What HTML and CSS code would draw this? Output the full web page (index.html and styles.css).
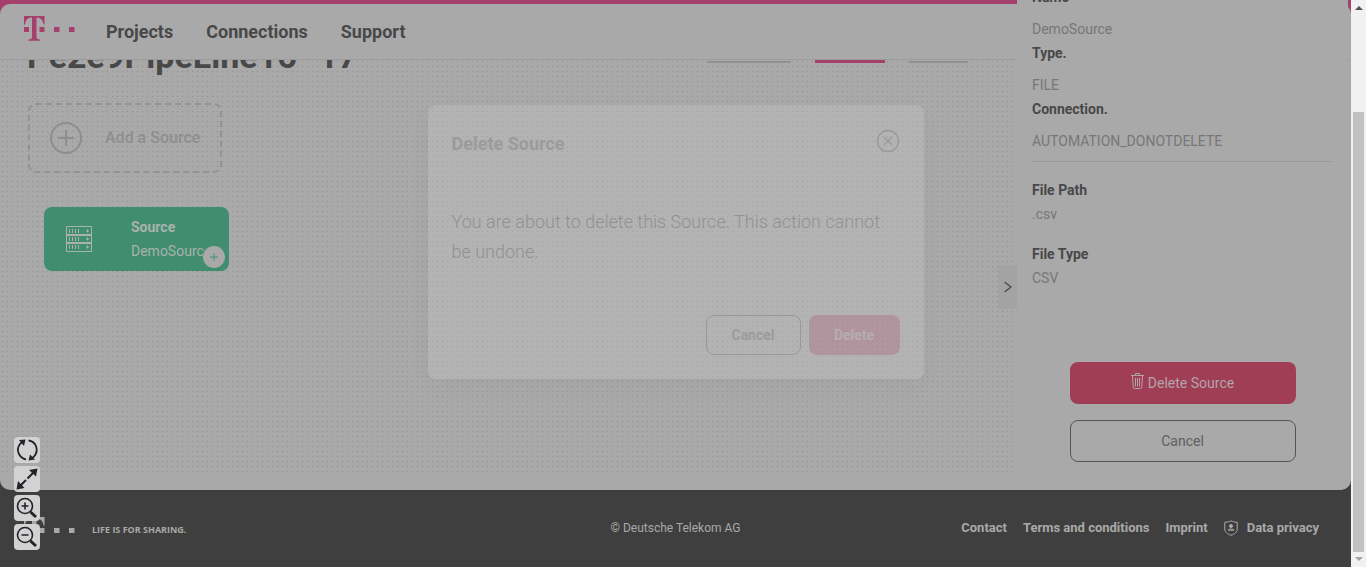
FILE: index.html
```html
<!DOCTYPE html>
<html lang="en">
<head>
<meta charset="utf-8">
<title>Pipeline</title>
<link rel="stylesheet" href="styles.css">
</head>
<body>
<svg class="defs" aria-hidden="true">
  <symbol id="t-logo" viewBox="0 0 52 26">
    <path d="M0 0h20.500v8.500h-1C19 4.500 17 1.500 12.500 1.400V20.500c0 2.400.8 2.900 3.500 3v1.200H4.500v-1.200c2.700-.1 3.500-.6 3.500-3V1.400C3.500 1.500 1.500 4.500 1 8.500H0zM0 11h5v5H0zM15.500 11h5v5h-5zM30 11h5.500v5H30zM45 11h5.500v5H45z" fill="currentColor"/>
  </symbol>
</svg>
<div class="window">
  <div class="app">
    <header class="header">
      <div class="header-inner">
        <svg class="logo" aria-hidden="true"><use href="#t-logo"/></svg>
        <nav class="nav">
          <a href="#">Projects</a>
          <a href="#">Connections</a>
          <a href="#">Support</a>
        </nav>
      </div>
    </header>

    <main class="workspace">
      <div class="title-row">
        <h1>Pe2e9PipeLine16 -17</h1>
        <div class="tabs">
          <span class="tab tab-first"></span>
          <span class="tab tab-active"></span>
          <span class="tab tab-last"></span>
        </div>
      </div>
      <button class="add-source" type="button">
        <svg width="34" height="34" viewBox="0 0 34 34" fill="none" stroke="currentColor" stroke-width="2" aria-hidden="true"><circle cx="17" cy="17" r="15"/><path d="M17 9v16M9 17h16"/></svg>
        Add a Source
      </button>
      <div class="node">
        <svg class="node-icon" width="26" height="26" viewBox="0 0 26 26" fill="none" stroke="currentColor" aria-hidden="true">
          <path d="M.5.500h25v25H.5zM0 8.500h26M0 9.500h26M0 16.500h26M0 17.500h26"/>
          <path d="M3.500 3v4M6.500 3v4M9.500 3v4M12.500 3v4M3.500 11v4M6.500 11v4M9.500 11v4M12.500 11v4M3.500 19v4M6.500 19v4M9.500 19v4M12.500 19v4"/>
          <path d="M20 5h3M20 13h3M20 21h3M21.500 3.500v3M21.500 11.500v3M21.500 19.500v3"/>
        </svg>
        <div class="node-text"><strong>Source</strong><span>DemoSource</span></div>
        <button class="node-add" type="button" aria-label="Add step"><svg width="10" height="10" viewBox="0 0 10 10" stroke="currentColor" aria-hidden="true"><path d="M5 1v8M1 5h8"/></svg></button>
      </div>
    </main>

    <footer class="footer">
      <div class="brand">
        <svg class="logo" aria-hidden="true"><use href="#t-logo"/></svg>
        <span>LIFE IS FOR SHARING.</span>
      </div>
      <p class="copyright">© Deutsche Telekom AG</p>
      <nav class="footer-links">
        <a href="#">Contact</a>
        <a href="#">Terms and conditions</a>
        <a href="#">Imprint</a>
        <a class="privacy" href="#"><svg width="14" height="16" viewBox="0 0 14 16" fill="none" stroke="currentColor" aria-hidden="true"><path d="M7 .8C5 2 3 2.200.8 2.200V9c0 3.500 3 5 6.200 6.300C10.200 14 13.200 12.500 13.200 9V2.200C11 2.200 9 2 7 .8z"/><circle cx="7" cy="6" r="1.500" fill="currentColor"/><path d="M4 10.200c.5-1.500 5.500-1.500 6 0z"/></svg>Data privacy</a>
      </nav>
    </footer>

    <section class="modal" role="dialog" aria-labelledby="modal-title">
      <div class="modal-head">
        <h2 id="modal-title">Delete Source</h2>
        <button class="close" type="button" aria-label="Close"><svg width="24" height="24" viewBox="0 0 24 24" fill="none" stroke="currentColor" aria-hidden="true"><circle cx="12" cy="12" r="10.500" stroke-width="1.500"/><path d="M8 8l8 8M16 8l-8 8" stroke-width="1.500"/></svg></button>
      </div>
      <p>You are about to delete this Source. This action cannot be undone.</p>
      <div class="modal-actions">
        <button class="ghost" type="button">Cancel</button>
        <button class="confirm" type="button">Delete</button>
      </div>
    </section>

    <aside class="drawer">
      <button class="drawer-toggle" type="button" aria-label="Collapse panel"><svg width="8" height="12" viewBox="0 0 8 12" fill="none" stroke="currentColor" stroke-width="1.300" aria-hidden="true"><path d="M.5 1l6.500 5-6.500 5"/></svg></button>
      <dl class="summary">
        <dt>Name</dt><dd>DemoSource</dd>
        <dt>Type.</dt><dd>FILE</dd>
        <dt>Connection.</dt><dd>AUTOMATION_DONOTDELETE</dd>
      </dl>
      <dl class="details">
        <dt>File Path</dt><dd>.csv</dd>
        <dt>File Type</dt><dd>CSV</dd>
      </dl>
      <div class="drawer-actions">
        <button class="danger" type="button"><svg width="13" height="16" viewBox="0 0 13 16" fill="none" stroke="currentColor" aria-hidden="true"><path d="M0 2.500h13M4.500 2.500v-2h4v2M1.500 3l.8 11.500q.1 1 1 1h6.400q.9 0 1-1L11.500 3M4.500 5v8.500M6.500 5v8.500M8.500 5v8.500"/></svg>Delete Source</button>
        <button class="outline" type="button">Cancel</button>
      </div>
    </aside>

    <div class="tools">
      <button type="button" aria-label="Reset view"><svg viewBox="0 0 26 26" fill="none" stroke="currentColor" stroke-width="1.800"><path d="M12 22.500C5 21 1.500 13 6 7L8 5M14.500 3.500C22 4.500 25.500 13 20 19.500L18.500 21"/><path d="M5 3l6.500-.5L10 9zM14.500 23.500L16 17.500l5 5z" fill="currentColor" stroke="none"/></svg></button>
      <button type="button" aria-label="Fit to screen"><svg viewBox="0 0 26 26" fill="none" stroke="currentColor" stroke-width="2"><path d="M6 20l6-6M13.500 12.500L20 6"/><path d="M23.500 2.500L22 10.500l-7-6.500zM2.500 23.500L4 15l6.500 7z" fill="currentColor" stroke="none"/></svg></button>
      <button type="button" aria-label="Zoom in"><svg viewBox="0 0 26 26" fill="none" stroke="currentColor" stroke-width="1.600"><circle cx="11" cy="11" r="7.500"/><path d="M7.500 11h7M11 7.500v7M16.500 16.500l2 2"/><path d="M16.500 17l5.500 5" stroke-width="3"/></svg></button>
      <button type="button" aria-label="Zoom out"><svg viewBox="0 0 26 26" fill="none" stroke="currentColor" stroke-width="1.600"><circle cx="11" cy="11" r="7.500"/><path d="M7.500 11h7M16.500 16.500l2 2"/><path d="M16.500 17l5.500 5" stroke-width="3"/></svg></button>
    </div>
  </div>
  <div class="scrollbar" aria-hidden="true">
    <span class="arrow-up"></span>
    <span class="thumb"></span>
    <span class="arrow-down"></span>
  </div>
</div>
</body>
</html>
```
FILE: styles.css
```css
* { box-sizing: border-box; }
body {
  margin: 0;
  font: 14px/24px Roboto, "Liberation Sans", sans-serif;
  color: #484848;
  background: #a9a9a9;
}
button { font: inherit; color: inherit; padding: 0; border: 0; background: none; }
a { color: inherit; text-decoration: none; }
h1, h2, p, dl, dd { margin: 0; }
svg { display: block; flex: none; }
.defs { position: absolute; width: 0; height: 0; }

.window { display: flex; height: 100vh; }
.app {
  position: relative;
  flex: 1;
  min-width: 0;
  display: flex;
  flex-direction: column;
  overflow: hidden;
  background: #3f3f3f;
}

.header { padding-top: 4px; background: #a5406d; }
.header-inner {
  display: flex;
  gap: 30px;
  height: 56px;
  padding: 0 24px;
  border-bottom: 1px solid #9c9c9c;
  border-radius: 10px 10px 0 0;
  background: #a9a9a9;
}
.header .logo { margin-top: 12px; color: #a5406d; }
.logo { width: 52px; height: 26px; }
.nav { display: flex; align-items: center; gap: 33px; font-size: 18px; font-weight: 700; }

.workspace {
  position: relative;
  flex: 1;
  border-radius: 0 0 10px 10px;
  background:
    linear-gradient(#a9a9a9, #a9a9a9) right / 334px 100% no-repeat,
    linear-gradient(#a9a9a9, #a9a9a9) bottom / 100% 16px no-repeat,
    conic-gradient(at 1px 1px, transparent 270deg, #8f8f8f 270deg) 2px 1px / 5px 5px,
    #a9a9a9;
}
.title-row { display: flex; justify-content: space-between; height: 40px; padding: 0 383px 0 27px; overflow: hidden; }
.title-row h1 { margin-top: -31px; font-size: 34px; line-height: 54px; white-space: nowrap; }
.tabs { display: flex; gap: 24px; }
.tab { height: 3px; border-bottom: 2px solid #909090; }
.tab-first { width: 84px; }
.tab-active { width: 70px; border-bottom: 3px solid #a5406d; }
.tab-last { width: 59px; }

.add-source {
  position: absolute;
  left: 28px;
  top: 43px;
  display: flex;
  align-items: center;
  gap: 22px;
  width: 194px;
  height: 70px;
  padding-left: 19px;
  border: 2px dashed #939393;
  border-radius: 8px;
  color: #8e8e8e;
  font-size: 16px;
  font-weight: 500;
}
.node {
  position: absolute;
  left: 44px;
  top: 147px;
  display: flex;
  align-items: center;
  gap: 39px;
  width: 185px;
  height: 64px;
  padding: 0 22px;
  border-radius: 8px;
  background: #408e6f;
  color: #a9b2ac;
}
.node-text { display: flex; flex-direction: column; width: 74px; overflow: hidden; }
.node-add {
  position: absolute;
  right: 4px;
  bottom: 3px;
  display: grid;
  place-items: center;
  width: 22px;
  height: 22px;
  border-radius: 50%;
  background: #a9a9a9;
  color: #408e6f;
}

.footer {
  display: grid;
  grid-template-columns: 1fr auto 1fr;
  align-items: center;
  height: 77px;
  padding: 0 24px 2px;
  color: #a9a9a9;
}
.brand { display: flex; align-items: center; gap: 16px; padding-top: 4px; font: 700 9px/16px "Open Sans", sans-serif; }
.copyright { font-size: 12px; }
.footer-links { display: flex; justify-content: flex-end; gap: 16px; padding-right: 8px; font-size: 13px; font-weight: 700; }
.privacy { display: flex; align-items: center; gap: 9px; }

.modal {
  position: absolute;
  left: calc(50% - 248px);
  top: 105px;
  width: 496px;
  padding: 24px;
  border-radius: 8px;
  background: rgba(197, 197, 197, 0.35);
  box-shadow: 0 8px 24px rgba(0, 0, 0, 0.03);
  color: #9b9b9b;
}
.modal-head { display: flex; justify-content: space-between; align-items: flex-start; height: 78px; }
.modal h2 { font-size: 18px; line-height: 30px; }
.modal p { font-size: 18px; font-weight: 300; line-height: 30px; color: #919191; }
.modal-actions { display: flex; justify-content: flex-end; gap: 8px; margin-top: 48px; font-weight: 700; }
.modal-actions button { height: 40px; border-radius: 8px; }
.ghost { width: 95px; border: 1px solid #999999; }
.modal-actions .confirm { width: 91px; background: rgba(172, 105, 130, 0.4); color: #b5adb0; }

.drawer {
  position: absolute;
  top: -15px;
  right: 3px;
  bottom: 77px;
  width: 331px;
  padding: 0 15px;
  border-radius: 0 0 10px 0;
  background: #a9a9a9;
}
.drawer-toggle {
  position: absolute;
  right: 100%;
  top: 280px;
  display: grid;
  place-items: center;
  width: 19px;
  height: 44px;
  background: #a3a3a3;
}
.drawer dt { font-weight: 700; }
.drawer dd { color: #777777; }
.summary { padding-bottom: 8px; border-bottom: 1px solid #9b9b9b; }
.summary dd { padding-top: 8px; }
.details { padding-top: 16px; }
.details dd { margin-bottom: 16px; }
.drawer-actions {
  display: flex;
  flex-direction: column;
  gap: 16px;
  width: 226px;
  margin: 72px auto 0;
}
.drawer-actions button { display: flex; justify-content: center; align-items: center; gap: 4px; height: 42px; border-radius: 8px; }
.danger { background: #9f3e55; color: #b3a5a9; }
.danger svg { margin-bottom: 4px; }
.drawer-actions .outline { border: 1px solid #555555; color: #606060; }

.tools { position: absolute; left: 14px; bottom: 17px; display: grid; gap: 3px; }
.tools button { width: 26px; height: 26px; border-radius: 4px; background: #d2d2d2; color: #212529; }

.scrollbar {
  display: flex;
  flex-direction: column;
  align-items: center;
  width: 15px;
  padding: 6px 0;
  background: #f1f1f1;
}
.arrow-up, .arrow-down { border: 4px solid transparent; }
.arrow-up { margin-bottom: 102px; border-top: 0; border-bottom-color: #505050; }
.thumb { flex: 1; width: 11px; margin-bottom: 5px; background: #c1c1c1; }
.arrow-down { border-bottom: 0; border-top-color: #a3a3a3; }
```
